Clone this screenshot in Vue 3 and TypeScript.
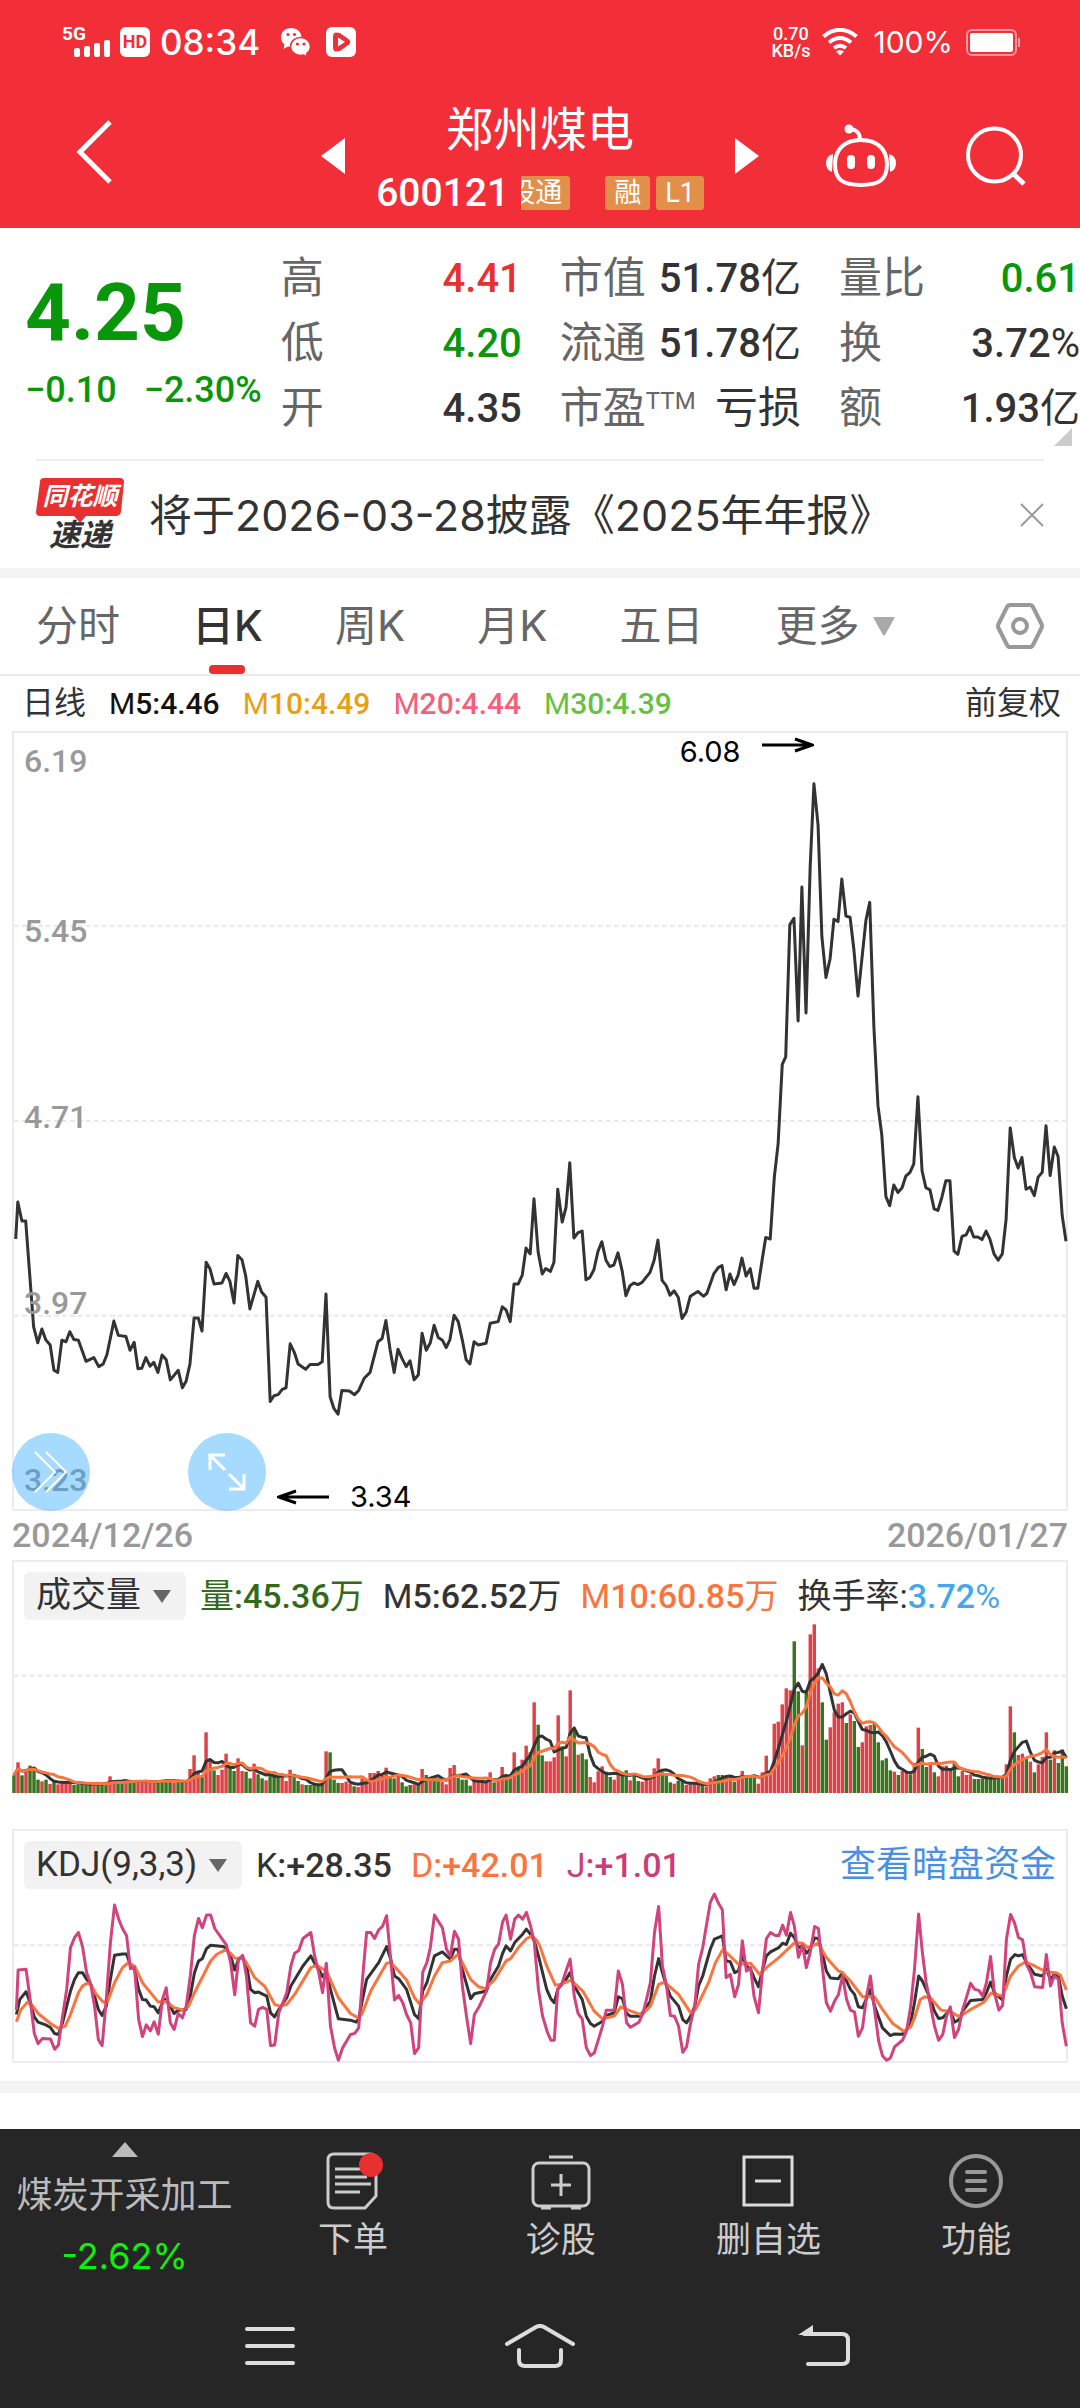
<script setup lang="ts">
import { ref } from 'vue'

interface Quote {
  label: string
  sup?: string
  value: string
  tone?: 'up' | 'down'
  wide?: boolean
}

const quotes: Quote[] = [
  { label: '高', value: '4.41', tone: 'up' },
  { label: '市值', value: '51.78亿' },
  { label: '量比', value: '0.61', tone: 'down' },
  { label: '低', value: '4.20', tone: 'down' },
  { label: '流通', value: '51.78亿' },
  { label: '换', value: '3.72%' },
  { label: '开', value: '4.35' },
  { label: '市盈', sup: 'TTM', value: '亏损', wide: true },
  { label: '额', value: '1.93亿' },
]

const tabs = ['分时', '日K', '周K', '月K', '五日']
const activeTab = ref('日K')
const volumeKind = ref('成交量')
const indicator = ref('KDJ(9,3,3)')

const averages = [
  { text: 'M5:4.46', color: '#111111' },
  { text: 'M10:4.49', color: '#e8a012' },
  { text: 'M20:4.44', color: '#f4607a' },
  { text: 'M30:4.39', color: '#66c23e' },
]
const volumeStats = [
  { text: '量:45.36万', tone: 'vol' },
  { text: 'M5:62.52万', tone: '' },
  { text: 'M10:60.85万', tone: 'orange' },
]
const kdjStats = [
  { text: 'K:+28.35', tone: '' },
  { text: 'D:+42.01', tone: 'orange' },
  { text: 'J:+1.01', tone: 'pink' },
]

/* Figures are set in medium weight, letters and units in regular. */
function runs(text: string) {
  return (text.match(/[0-9.:+−]+|[^0-9.:+−]+/g) ?? []).map((t) => ({
    t,
    figure: /[0-9]/.test(t),
  }))
}

const axis = [
  { text: '6.19', top: 10 },
  { text: '5.45', top: 180 },
  { text: '4.71', top: 366 },
  { text: '3.97', top: 552 },
  { text: '3.23', top: 729 },
]

/* The plot space is 3136 units wide; series are stored as two halves. */
const HALF = 1568
function joinHalves(left: string, right: string): string {
  const moved = right.split(' ').map((p) => {
    const [x, y] = p.split(',').map(Number)
    return `${x + HALF},${y}`
  })
  return `${left} ${moved.join(' ')}`
}

const price = joinHalves(
  '46,962 52,892 64,928 75,928 98,1128 110,1158 122,1132 133,1152 146,1162 157,1210 168,1214 180,1153 192,1156 203,1137 215,1152 228,1153 250,1193 273,1186 287,1203 300,1198 311,1180 331,1117 344,1144 366,1146 378,1172 390,1157 401,1207 412,1206 424,1186 436,1202 447,1195 459,1214 471,1181 483,1190 495,1228 518,1210 530,1243 541,1230 552,1198 564,1111 576,1111 587,1136 599,1006 610,1018 622,1047 645,1045 657,1027 668,1042 680,1083 691,993 703,1001 714,1032 726,1094 749,1042 760,1062 773,1072 785,1269 796,1258 808,1256 820,1246 831,1243 843,1160 855,1176 866,1198 888,1208 901,1199 924,1199 936,1194 947,1066 959,1260 970,1282 982,1293 993,1248 1015,1249 1030,1256 1042,1248 1058,1225 1075,1214 1098,1156 1110,1150 1121,1116 1133,1170 1145,1214 1156,1170 1168,1188 1180,1203 1191,1192 1203,1228 1215,1219 1226,1140 1238,1172 1250,1158 1261,1125 1273,1148 1285,1153 1296,1167 1307,1152 1319,1106 1331,1118 1342,1150 1354,1190 1365,1198 1377,1156 1389,1162 1412,1159 1424,1121 1447,1118 1459,1090 1470,1096 1482,1118 1493,1047 1505,1047 1517,1030 1528,979 1540,990 1551,886 1563,986',
  '7,1028 17,1018 31,1023 41,1006 52,868 65,930 76,902 87,818 99,960 111,950 123,947 134,1039 145,1035 157,1020 169,985 180,967 192,1002 203,1014 215,1011 227,988 239,1022 250,1069 262,1050 273,1045 285,1048 297,1044 320,1025 332,1002 343,964 355,1040 367,1050 378,1068 390,1060 402,1072 413,1112 425,1100 437,1070 459,1061 475,1070 485,1065 505,1028 518,1016 529,1012 541,1058 552,1028 564,1048 576,1030 587,998 599,1032 611,1018 622,1055 633,1055 645,1004 656,959 669,962 681,845 692,782 704,632 714,618 726,368 738,356 750,550 761,297 773,535 785,260 796,102 808,180 819,390 831,468 843,432 854,358 866,362 877,282 889,352 901,354 912,415 924,503 947,360 958,326 970,560 982,710 993,765 1005,882 1016,899 1028,860 1040,874 1052,865 1063,843 1075,836 1086,820 1098,693 1110,833 1121,865 1133,869 1145,905 1156,908 1168,882 1179,852 1191,852 1203,985 1214,991 1226,957 1238,954 1249,939 1260,958 1272,958 1284,963 1296,947 1307,962 1319,990 1331,1002 1343,990 1354,925 1366,752 1378,808 1389,828 1400,808 1412,868 1424,864 1436,880 1447,845 1459,836 1470,748 1482,842 1494,788 1505,806 1517,918 1528,966',
)

const kLine = joinHalves(
  '48,615 58,570 76,547 88,580 100,622 111,638 133,646 147,654 159,672 170,675 182,640 205,545 217,510 228,490 240,490 252,510 264,525 275,560 286,600 297,618 309,590 321,510 333,438 356,434 368,434 379,468 391,480 403,540 414,570 425,572 437,590 448,592 460,610 472,580 483,568 506,612 518,602 541,600 553,560 565,490 577,455 588,448 600,418 612,408 648,412 658,418 670,440 682,482 693,450 705,445 716,465 728,540 740,550 751,548 775,560 786,610 798,622 810,600 833,565 845,530 880,470 903,440 914,462 926,480 937,502 948,488 960,540 983,628 1018,632 1035,638 1042,628 1053,570 1065,510 1100,460 1123,412 1135,450 1146,500 1158,508 1181,540 1204,615 1216,628 1228,545 1240,520 1262,440 1285,428 1308,450 1320,420 1330,420 1343,480 1367,568 1378,553 1413,545 1425,510 1448,470 1460,432 1470,410 1483,425 1495,400 1518,375 1529,360 1541,375 1552,395 1564,440',
  '8,490 20,540 32,568 42,580 52,540 76,510 88,490 100,530 123,570 135,620 147,642 158,650 182,635 193,618 216,610 228,562 240,568 252,612 263,620 288,620 300,608 321,575 333,500 345,448 356,490 368,530 379,560 403,590 415,630 426,640 438,620 450,590 461,530 473,500 495,420 507,390 530,380 541,455 553,457 566,490 577,485 588,440 600,470 612,480 622,505 635,532 647,480 658,440 670,428 694,415 705,402 716,406 728,372 739,385 751,415 763,410 774,432 785,420 798,386 809,388 820,430 832,485 844,506 867,508 879,490 902,540 914,555 925,592 937,595 960,540 972,590 995,655 1018,678 1030,673 1053,674 1065,660 1077,640 1088,580 1100,500 1111,515 1135,570 1146,605 1158,627 1170,625 1192,600 1204,638 1216,632 1228,605 1251,573 1286,570 1297,550 1309,518 1320,550 1344,572 1355,500 1367,450 1380,436 1390,440 1402,436 1413,460 1437,495 1460,500 1471,480 1483,510 1494,495 1506,500 1517,560 1529,598',
)

const dLine = joinHalves(
  '48,637 60,602 80,578 92,585 111,612 147,642 170,657 190,650 205,615 228,550 240,530 254,521 264,525 280,555 300,578 312,578 333,520 356,475 373,460 391,470 414,520 460,578 483,576 506,595 535,602 548,590 565,550 612,455 630,435 655,422 670,432 682,446 705,448 716,460 740,505 770,532 798,585 812,590 833,585 856,555 903,475 920,468 948,485 983,565 1018,612 1042,626 1053,610 1077,545 1123,462 1135,460 1158,485 1181,512 1204,565 1219,584 1240,555 1262,500 1285,460 1308,455 1330,435 1343,460 1367,510 1390,532 1410,538 1437,510 1470,455 1483,448 1506,415 1530,388 1545,380 1560,395',
  '0,410 20,470 45,527 62,525 90,512 125,545 158,605 182,628 216,620 235,592 263,604 296,616 321,590 345,525 362,518 403,555 438,610 452,600 490,520 510,460 532,420 577,465 612,462 638,495 658,475 694,445 740,400 763,402 778,415 809,402 832,445 867,485 879,490 902,515 937,562 972,562 995,600 1025,642 1058,666 1077,652 1090,620 1105,570 1118,562 1135,566 1165,602 1192,606 1218,622 1251,600 1290,578 1310,551 1344,560 1367,500 1390,470 1410,458 1437,470 1471,488 1500,490 1512,498 1529,542',
)

const jLine = joinHalves(
  '48,602 53,482 76,480 88,570 100,672 111,702 123,687 147,688 159,719 170,706 182,620 194,540 205,415 217,385 228,370 240,412 252,490 264,525 275,590 286,690 297,708 309,570 321,400 333,288 345,330 356,358 368,380 379,478 391,475 403,630 414,681 425,646 437,664 448,637 460,674 472,570 483,535 495,640 506,660 518,612 530,625 541,590 553,500 565,378 577,328 588,356 600,318 612,318 624,358 658,408 670,460 682,556 693,450 705,438 716,500 728,640 740,650 751,600 763,594 775,600 786,708 798,706 810,610 833,550 845,470 856,432 868,424 880,388 903,370 914,440 926,490 937,550 948,462 960,650 972,715 983,752 995,715 1018,675 1030,672 1042,655 1053,510 1065,370 1077,370 1088,388 1100,362 1111,352 1123,320 1135,450 1146,572 1158,558 1170,580 1181,615 1193,640 1204,732 1216,715 1228,488 1240,460 1250,415 1262,318 1285,356 1297,420 1308,440 1320,366 1332,390 1343,530 1355,620 1367,702 1378,615 1390,595 1413,545 1425,460 1437,420 1448,405 1460,338 1470,318 1483,390 1495,330 1506,318 1518,330 1529,310 1541,350 1552,400 1564,540',
  '8,620 22,668 32,692 42,692 52,540 65,520 76,485 88,450 100,560 111,612 123,628 135,714 147,738 158,730 170,690 182,650 193,602 216,602 228,485 240,525 252,640 263,653 288,638 300,610 312,560 321,520 333,370 345,292 356,470 368,530 379,618 391,620 403,650 415,728 426,712 438,640 450,590 461,465 473,415 495,280 507,255 520,285 530,302 541,505 553,495 566,562 577,525 588,395 600,485 612,475 622,560 635,610 647,480 658,388 670,370 682,378 694,380 705,348 716,378 728,310 739,350 751,444 763,408 774,475 785,430 798,352 809,358 820,470 832,580 844,605 856,575 867,556 879,500 891,570 902,602 914,608 925,680 937,655 949,560 960,500 972,600 984,695 995,738 1007,752 1018,745 1030,712 1053,692 1065,665 1077,590 1088,480 1100,315 1111,430 1122,520 1135,590 1146,650 1158,692 1170,675 1181,620 1192,592 1204,684 1216,660 1228,600 1240,560 1251,522 1263,540 1275,543 1286,560 1297,520 1309,442 1320,550 1333,602 1344,588 1355,390 1367,316 1378,340 1390,385 1402,392 1413,465 1425,490 1437,532 1460,534 1471,436 1483,530 1494,500 1506,510 1517,640 1529,710',
)

/* Daily volume: r = rising day, g = falling day, then the bar height. */
const volumeData =
  'g53 r92 g53 r72 g82 g76 g40 r35 g40 r27 g36 r26 r34 r34 r36 g24 g26 g27 g26 g27 r28 g28 g28 g30 r50 r36 g34 g30 r36 g36 g36 r34 r30 r36 r38 r30 g36 g38 g40 g38 r30 g34 g34 r36 r72 r113 r60 g48 r182 r100 g68 r54 r70 r118 g76 g66 r104 r66 g64 g44 r88 g56 g44 r38 g56 g56 g54 r54 r36 r70 g48 g36 r26 g24 g24 g24 g24 g30 r125 g122 g40 g30 r30 r34 r28 g20 r18 r44 r40 r60 r60 r66 r52 r76 g46 g44 r52 g32 g20 g24 r26 g26 r72 g54 r44 g44 g44 r34 r26 r75 r84 g46 g40 g40 g22 r36 r38 r38 r30 r62 g32 r42 r78 g50 g50 r122 g76 r100 r142 g122 r272 g205 g113 r95 r95 r107 r233 g140 r110 r308 g185 r115 g119 g101 r48 r32 r65 r80 g64 g48 r40 r58 g60 g68 r38 g52 g36 r34 r50 r52 r74 r104 g62 g56 g32 r28 g36 g34 r24 r26 r28 r26 g26 r20 r44 r50 g54 g54 r46 r50 g34 r48 r66 g48 g50 g48 r28 r62 r112 r68 r208 r214 r266 r314 r308 g455 g305 r143 g300 r476 r506 r374 g272 g160 r197 r242 r268 r272 g210 r236 g216 g138 r152 r200 r204 g208 g152 g98 g104 g68 r64 g54 r66 r62 g56 r90 r196 g132 g78 r86 g62 r50 r80 r82 r74 g90 g50 r66 r54 r56 g42 g42 g42 g48 g48 g46 g46 g50 r86 r260 g182 r114 r118 g104 r94 g62 r86 r108 r182 g100 r128 g90 g130 g80'
const VOLUME_BASE = 879
const bars = volumeData.split(' ').map((s, i) => ({
  x: 41 + i * 11.62,
  h: Number(s.slice(1)),
  fill: s[0] === 'r' ? '#de4246' : '#3a741e',
}))

function movingAverage(days: number): string {
  return bars
    .map((bar, i) => {
      const span = bars.slice(Math.max(0, i - days + 1), i + 1)
      const mean = span.reduce((sum, b) => sum + b.h, 0) / span.length
      return `${bar.x.toFixed(1)},${(VOLUME_BASE - mean).toFixed(1)}`
    })
    .join(' ')
}
const volumeMa5 = movingAverage(5)
const volumeMa10 = movingAverage(10)
</script>

<template>
  <div class="page">
    <header class="header">
      <div class="status">
        <div class="status-side">
          <div class="signal">
            <span class="signal-kind">5G</span>
            <svg class="signal-bars" width="36" height="17" viewBox="0 0 36 17" fill="#fff">
              <rect x="0" y="8" width="6" height="9" rx="2" />
              <rect x="10" y="6" width="6" height="11" rx="2" />
              <rect x="20" y="3" width="6" height="14" rx="2" />
              <rect x="30" y="0" width="6" height="17" rx="2" />
            </svg>
          </div>
          <span class="hd">HD</span>
          <span class="clock">08:34</span>
          <svg class="wechat" width="31" height="31" viewBox="0 0 31 31">
            <path d="M11 1C5 1 1 5 1 10.500c0 3 1.500 5.500 3.500 7L3.500 22l4.500-2.500c1 .3 2 .5 3 .5 6 0 10.500-4 10.500-9.500S17 1 11 1z" fill="#fff" />
            <path d="M20.500 10.500c-5.500 0-10 4-10 9s4.500 9 10 9c1 0 2.200-.2 3.200-.5l3.600 2.200-.6-3.600c2.300-1.700 3.800-4.200 3.800-7.100 0-5-4.500-9-10-9z" fill="#fff" stroke="#f22f38" stroke-width="1.500" />
            <g fill="#f22f38"><circle cx="8" cy="7.500" r="1.600" /><circle cx="14.500" cy="7.500" r="1.600" /><circle cx="17.500" cy="17" r="1.600" /><circle cx="24" cy="17" r="1.600" /></g>
          </svg>
          <svg width="30" height="30" viewBox="0 0 30 30">
            <rect width="30" height="30" rx="6" fill="#fff" />
            <path d="M9.500 5.500 14 6l9 6.500q2.500 2.500 0 5L14 24l-4.500.5Q7 24 7 20V10q0-4 2.500-4.500z" fill="#f22f38" />
            <path d="M12 10.500 19 15l-7 4.500z" fill="#fff" />
          </svg>
        </div>
        <div class="status-side">
          <div class="speed"><span>0.70</span><span>KB/s</span></div>
          <svg width="36" height="28" viewBox="0 0 36 28" fill="none" stroke="#fff" stroke-width="4">
            <path d="M1.500 8.500Q18-5 34.500 8.500" /><path d="M7 14.500Q18 5.500 29 14.500" /><path d="M12 20Q18 15.500 24 20" />
            <path d="M14 23.500Q18 21 22 23.500L18 27.500z" fill="#fff" stroke="none" />
          </svg>
          <span class="percent">100%</span>
          <svg width="54" height="27" viewBox="0 0 54 27">
            <rect x="1" y="1" width="49" height="25" rx="5" fill="none" stroke="#fff" stroke-opacity=".5" stroke-width="2" />
            <rect x="4" y="4" width="43" height="19" rx="2" fill="#fff" />
            <rect x="52" y="9" width="2" height="9" fill="#fff" fill-opacity=".5" />
          </svg>
        </div>
      </div>
      <nav class="titlebar">
        <div class="titlebar-left">
          <button class="plain" aria-label="返回">
            <svg width="37" height="64" viewBox="0 0 37 64" fill="none" stroke="#fff" stroke-width="5"><path d="M34 2 4 32l30 30" /></svg>
          </button>
        </div>
        <div class="titlebar-mid">
          <button class="plain" aria-label="上一只">
            <svg width="24" height="36" viewBox="0 0 24 36"><path d="M24 0v36L0 18z" fill="#fff" /></svg>
          </button>
          <div class="stock">
            <h1>郑州煤电</h1>
            <div class="stock-code">
              <span class="code">600121</span>
              <span class="badge badge-cut"><span>股通</span></span>
              <span class="badge">融</span>
              <span class="badge badge-last">L1</span>
            </div>
          </div>
          <button class="plain" aria-label="下一只">
            <svg width="24" height="36" viewBox="0 0 24 36"><path d="M0 0v36l24-18z" fill="#fff" /></svg>
          </button>
        </div>
        <div class="titlebar-right">
          <button class="plain" aria-label="助手">
            <svg width="70" height="64" viewBox="0 0 70 64" fill="none" stroke="#fff" stroke-width="4">
              <path d="M35 16C18 16 9 26 9 40c0 16 8 21 26 21s26-5 26-21c0-14-9-24-26-24z" />
              <path d="M34 16c0-6-2-10-10-11" /><circle cx="23" cy="5" r="4.500" fill="#fff" stroke="none" />
              <rect x="21" y="31" width="8" height="14" rx="4" fill="#fff" stroke="none" />
              <rect x="41" y="31" width="8" height="14" rx="4" fill="#fff" stroke="none" />
              <path d="M7 30q-7 2-7 9t6 9zM63 30q7 2 7 9t-6 9z" fill="#fff" stroke="none" />
            </svg>
          </button>
          <button class="plain" aria-label="搜索">
            <svg width="60" height="60" viewBox="0 0 60 60" fill="none" stroke="#fff" stroke-width="4"><circle cx="28.500" cy="29" r="26.500" /><path d="M47 47.500 58 58" stroke-width="5" /></svg>
          </button>
        </div>
      </nav>
    </header>

    <section class="quote">
      <div class="quote-main">
        <div class="last">4.25</div>
        <div class="change"><span>−0.10</span><span>−2.30%</span></div>
      </div>
      <dl class="quote-grid">
        <div v-for="q in quotes" :key="q.label" class="quote-cell">
          <dt>{{ q.label }}<sup v-if="q.sup">{{ q.sup }}</sup></dt>
          <dd :class="[q.tone, { wide: q.wide }]"><span v-for="(r, i) in runs(q.value)" :key="i" :class="{ figure: r.figure }">{{ r.t }}</span></dd>
        </div>
      </dl>
      <svg class="corner" width="18" height="18" viewBox="0 0 18 18"><path d="M18 0v18H0z" fill="#ccc" /></svg>
    </section>

    <section class="news">
      <div class="news-logo">
        <svg class="news-flag" width="88" height="45" viewBox="0 0 88 45"><path d="M8 0h76q4 0 4 4l-3 30q-1 4-5 4H50l-6 7-6-7H4q-4 0-4-4L4 4q0-4 4-4z" fill="#e93030" /></svg>
        <span class="news-brand">同花顺</span>
        <span class="news-sub">速递</span>
      </div>
      <a class="news-text" href="#">将于2026-03-28披露《2025年年报》</a>
      <button class="plain" aria-label="关闭">
        <svg width="24" height="24" viewBox="0 0 24 24" stroke="#999" stroke-width="2"><path d="M1 1l22 22M23 1 1 23" /></svg>
      </button>
    </section>

    <nav class="tabs">
      <button
        v-for="t in tabs"
        :key="t"
        class="plain tab"
        :class="{ active: t === activeTab }"
        @click="activeTab = t"
      >{{ t }}</button>
      <button class="plain tab more">更多
        <svg width="22" height="19" viewBox="0 0 22 19"><path d="M1 0h20q1 1 0 2L12 18q-1 1-2 0L1 2Q0 1 1 0z" fill="#aaa" /></svg>
      </button>
      <button class="plain settings" aria-label="设置">
        <svg width="48" height="46" viewBox="0 0 48 46" fill="none" stroke="#999" stroke-width="4"><path d="M14 2h20q2 0 3 2l8.500 17q1 2 0 4L37 42q-1 2-3 2H14q-2 0-3-2L2.500 25q-1-2 0-4L11 4q1-2 3-2z" /><circle cx="24" cy="23" r="7" /></svg>
      </button>
    </nav>

    <div class="legend">
      <span class="legend-name">日线</span>
      <span v-for="a in averages" :key="a.text" :style="{ color: a.color }"><span v-for="(r, i) in runs(a.text)" :key="i" :class="{ figure: r.figure }">{{ r.t }}</span></span>
      <button class="plain legend-adjust">前复权</button>
    </div>

    <section class="panel price-panel">
      <svg class="plot" viewBox="41 6 3055 1466" preserveAspectRatio="none">
        <path class="dash" d="M41 370H3096M41 739H3096M41 1107H3096" />
        <polyline class="line" :points="price" stroke="#333" />
      </svg>
      <span v-for="a in axis" :key="a.text" class="axis" :style="{ top: a.top + 'px' }">{{ a.text }}</span>
      <div class="mark mark-high">
        <span>6.08</span>
        <svg width="52" height="16" viewBox="0 0 52 16" fill="none" stroke="#000" stroke-width="3"><path d="M0 8h50M33 2l17 6-17 6" /></svg>
      </div>
      <div class="mark mark-low">
        <svg width="52" height="16" viewBox="0 0 52 16" fill="none" stroke="#000" stroke-width="3"><path d="M52 8H2M19 2 2 8l17 6" /></svg>
        <span>3.34</span>
      </div>
      <button class="round round-skip" aria-label="展开">
        <svg width="34" height="42" viewBox="0 0 34 42" fill="none" stroke="#fff" stroke-width="2"><path d="M1 1l20 20L1 41M12 1l20 20-20 20" /></svg>
      </button>
      <button class="round round-full" aria-label="全屏">
        <svg width="38" height="38" viewBox="0 0 38 38" fill="none" stroke="#fff" stroke-width="3"><path d="M2 17V2h15M2 2l15 15M36 21v15H21M36 36 21 21" /></svg>
      </button>
    </section>
    <div class="dates"><span>2024/12/26</span><span>2026/01/27</span></div>

    <section class="panel volume-panel">
      <div class="panel-head">
        <label class="picker">
          <select v-model="volumeKind" aria-label="指标一"><option>成交量</option></select>
          <svg width="18" height="13" viewBox="0 0 18 13"><path d="M0 0h18L9 13z" fill="#666" /></svg>
        </label>
        <div class="stats">
          <span v-for="s in volumeStats" :key="s.text" :class="s.tone"><span v-for="(r, i) in runs(s.text)" :key="i" :class="{ figure: r.figure }">{{ r.t }}</span></span>
          <span>换手率:<span class="blue"><span class="figure">3.72</span>%</span></span>
        </div>
      </div>
      <svg class="plot" viewBox="41 360 3055 519" preserveAspectRatio="none">
        <path class="dash" d="M41 527H3096" />
        <rect v-for="(b, i) in bars" :key="i" :x="b.x - 5" :y="VOLUME_BASE - b.h" width="10" :height="b.h" :fill="b.fill" />
        <polyline class="line" :points="volumeMa5" stroke="#333" />
        <polyline class="line" :points="volumeMa10" stroke="#fa743e" />
      </svg>
    </section>

    <section class="panel kdj-panel">
      <div class="panel-head">
        <label class="picker">
          <select v-model="indicator" aria-label="指标二"><option>KDJ(9,3,3)</option></select>
          <svg width="18" height="13" viewBox="0 0 18 13"><path d="M0 0h18L9 13z" fill="#666" /></svg>
        </label>
        <div class="stats">
          <span v-for="s in kdjStats" :key="s.text" :class="s.tone"><span v-for="(r, i) in runs(s.text)" :key="i" :class="{ figure: r.figure }">{{ r.t }}</span></span>
        </div>
        <a class="funds" href="#">查看暗盘资金</a>
      </div>
      <svg class="plot" viewBox="41 240 3055 514" preserveAspectRatio="none">
        <path class="dash" d="M41 408H3096" />
        <polyline class="line" :points="kLine" stroke="#333" />
        <polyline class="line" :points="dLine" stroke="#fa743e" />
        <polyline class="line" :points="jLine" stroke="#d1437c" />
      </svg>
    </section>

    <div class="band"></div>

    <footer class="footer">
      <div class="toolbar">
        <button class="plain sector">
          <svg width="26" height="15" viewBox="0 0 26 15"><path d="M13 0l13 15H0z" fill="#bbb" /></svg>
          <span class="sector-name">煤炭开采加工</span>
          <span class="sector-change">-2.62%</span>
        </button>
        <button class="plain tool">
          <svg width="60" height="60" viewBox="0 0 60 60" fill="none" stroke="#ccc" stroke-width="3">
            <path d="M11 3h36q6 0 6 6v36L42 57H11q-6 0-6-6V9q0-6 6-6z" />
            <path d="M12 18h32M12 26h32M12 33h36M12 41h25" stroke-width="3" /><circle cx="48" cy="14" r="12" fill="#e93030" stroke="none" />
          </svg>
          <span>下单</span>
        </button>
        <button class="plain tool">
          <svg width="60" height="60" viewBox="0 0 60 60" fill="none" stroke="#ccc" stroke-width="3">
            <rect x="2" y="12" width="56" height="43" rx="6" /><path d="M18 6h24" /><path d="M20 34h20M30 23v22M10 57h10M40 57h10" />
          </svg>
          <span>诊股</span>
        </button>
        <button class="plain tool">
          <svg width="60" height="60" viewBox="0 0 60 60" fill="none" stroke="#ddd" stroke-width="3"><rect x="6" y="6" width="48" height="48" /><path d="M17 30h26" /></svg>
          <span>删自选</span>
        </button>
        <button class="plain tool">
          <svg width="60" height="60" viewBox="0 0 60 60" fill="none" stroke="#999" stroke-width="4"><circle cx="30" cy="30" r="25" /><path d="M21 21h18M21 30h18M21 39h18" stroke-linecap="round" /></svg>
          <span>功能</span>
        </button>
      </div>
      <div class="system">
        <button class="plain" aria-label="任务">
          <svg width="50" height="40" viewBox="0 0 50 40" stroke="#ddd" stroke-width="4" stroke-linecap="round"><path d="M2 3h46M2 20h46M2 37h46" /></svg>
        </button>
        <button class="plain" aria-label="主页">
          <svg width="72" height="44" viewBox="0 0 72 44" fill="none" stroke="#ddd" stroke-width="4" stroke-linecap="round"><path d="M3 20 32 3q4-2 8 0l29 17" /><path d="M15 26v10q0 6 6 6h30q6 0 6-6V26" /></svg>
        </button>
        <button class="plain" aria-label="后退">
          <svg width="52" height="42" viewBox="0 0 52 42" fill="none" stroke="#ddd" stroke-width="4"><path d="M6 9h38q6 0 6 6v19q0 5-6 5H10" stroke-linecap="round" /><path d="M15 0v10H0z" fill="#ddd" stroke="none" /></svg>
        </button>
      </div>
    </footer>
  </div>
</template>

<style>
body {
  background: #fff;
}
</style>

<style scoped>
.page {
  background: #fff;
  color: #333;
  font-family: Roboto, "Noto Sans CJK SC", sans-serif;
  font-size: 34px;
  overflow: hidden;
}
svg {
  display: block;
  flex: none;
}
.plain {
  background: none;
  border: 0;
  padding: 0;
  margin: 0;
  font: inherit;
  color: inherit;
}
a {
  text-decoration: none;
}
.figure {
  font-weight: 500;
}

.header {
  background: #f22f38;
  color: #fff;
}
.status {
  height: 84px;
  padding: 0 60px 0 62px;
  display: flex;
  align-items: center;
  justify-content: space-between;
  font-family: Inter, sans-serif;
}
.status-side {
  display: flex;
  align-items: center;
}
.signal {
  width: 48px;
  height: 30px;
  display: flex;
  flex-direction: column;
  align-items: flex-end;
  justify-content: space-between;
}
.signal-kind {
  align-self: flex-start;
  font: 700 19px/13px Roboto, sans-serif;
}
.hd {
  width: 30px;
  height: 30px;
  margin: 0 10px;
  border-radius: 6px;
  background: #fff;
  color: #f22f38;
  font: 700 18px/30px Roboto, sans-serif;
  text-align: center;
}
.clock {
  font-size: 35px;
  font-weight: 500;
}
.wechat {
  margin: 0 15px 0 20px;
}
.speed {
  display: flex;
  flex-direction: column;
  align-items: center;
  margin-right: 12px;
  font: 500 18px/17px Roboto, sans-serif;
}
.percent {
  margin: 0 13px 0 15px;
  font-size: 30px;
}
.titlebar {
  height: 144px;
  display: grid;
  grid-template-columns: 1fr auto 1fr;
  align-items: center;
}
.titlebar-left {
  padding-left: 76px;
}
.titlebar-mid {
  display: flex;
  align-items: center;
  gap: 31px;
}
.titlebar-right {
  display: flex;
  align-items: center;
  justify-content: flex-end;
  gap: 70px;
  padding-right: 54px;
}
.stock h1 {
  margin: 0 0 18px;
  font-size: 47px;
  font-weight: 400;
  line-height: 56px;
  text-align: center;
}
.stock-code {
  display: flex;
  align-items: center;
  height: 34px;
}
.code {
  font-size: 39px;
  font-weight: 500;
  line-height: 34px;
  margin-right: 12px;
}
.badge {
  height: 34px;
  padding: 0 9px;
  border-radius: 3px;
  background: #e28f4a;
  font-size: 27px;
  line-height: 34px;
  white-space: nowrap;
}
.badge-cut {
  width: 41px;
  padding: 0 8px 0 0;
  margin-right: 35px;
  border-radius: 0 3px 3px 0;
  display: flex;
  justify-content: flex-end;
  overflow: hidden;
}
.badge-last {
  margin-left: 6px;
}

.quote {
  position: relative;
  display: flex;
  padding: 18px 0;
}
.quote-main {
  flex: 0 0 26%;
  padding: 25px 0 0 25px;
  box-sizing: border-box;
  color: #0a960a;
}
.last {
  font-size: 80px;
  font-weight: 700;
  line-height: 84px;
}
.change {
  display: flex;
  gap: 27px;
  margin-top: 15px;
  font-size: 36px;
  font-weight: 500;
  line-height: 40px;
  white-space: nowrap;
}
.quote-grid {
  flex: 1;
  margin: 0;
  display: grid;
  grid-template-columns: repeat(3, minmax(0, 1fr));
  column-gap: 38px;
}
.quote-cell {
  display: flex;
  justify-content: space-between;
  height: 65px;
  line-height: 65px;
  white-space: nowrap;
}
dt {
  font-size: 43px;
  color: #666;
}
dt sup {
  font-size: 24px;
  line-height: 24px;
  vertical-align: 14px;
}
dd {
  margin: 0;
  font-size: 40px;
}
dd.wide {
  font-size: 43px;
}
.up {
  color: #e93030;
}
.down {
  color: #0a960a;
}
.corner {
  position: absolute;
  right: 8px;
  bottom: 13px;
}

.news {
  display: flex;
  align-items: center;
  height: 107px;
  margin: 0 36px;
  border-top: 2px solid #eee;
}
.news-logo {
  position: relative;
  width: 88px;
  height: 73px;
  margin-right: 25px;
  font-weight: 700;
  font-style: italic;
  text-align: center;
}
.news-flag {
  position: absolute;
  inset: 0;
}
.news-brand {
  position: relative;
  display: block;
  color: #fff;
  font-size: 25px;
  line-height: 38px;
}
.news-sub {
  position: relative;
  display: block;
  font-size: 31px;
  line-height: 40px;
}
.news-text {
  flex: 1;
  color: #333;
  font-family: Inter, "Noto Sans CJK SC", sans-serif;
  font-size: 43px;
  line-height: 60px;
  white-space: nowrap;
}

.tabs {
  display: flex;
  align-items: stretch;
  gap: 72px;
  height: 96px;
  padding: 0 36px;
  border-top: 10px solid #f4f4f4;
  border-bottom: 2px solid #eaeaea;
}
.tab {
  position: relative;
  color: #666;
  font-family: Inter, "Noto Sans CJK SC", sans-serif;
  font-size: 42px;
  line-height: 96px;
  white-space: nowrap;
}
.tab.active {
  color: #333;
  font-weight: 500;
}
.tab.active::after {
  content: "";
  position: absolute;
  left: 50%;
  bottom: 0;
  width: 36px;
  height: 9px;
  margin-left: -18px;
  border-radius: 4px;
  background: #e93030;
}
.more {
  display: flex;
  align-items: center;
  gap: 14px;
}
.settings {
  margin-left: auto;
}

.legend {
  display: flex;
  align-items: center;
  gap: 23px;
  height: 55px;
  padding: 0 19px 0 22px;
  font-size: 30px;
}
.legend-name,
.legend-adjust {
  font-size: 32px;
  line-height: 55px;
}
.legend-adjust {
  margin-left: auto;
}

.panel {
  position: relative;
  margin: 0 12px;
  border: 2px solid #ececec;
}
.plot {
  width: 100%;
  overflow: visible;
}
.line {
  fill: none;
  stroke-width: 3px;
  stroke-linejoin: round;
  vector-effect: non-scaling-stroke;
}
.dash {
  fill: none;
  stroke: #e8e8e8;
  stroke-width: 2px;
  stroke-dasharray: 5 3;
  vector-effect: non-scaling-stroke;
}
.price-panel .plot {
  height: 776px;
}
.axis {
  position: absolute;
  left: 10px;
  color: #999;
  font-size: 32px;
  font-weight: 500;
  line-height: 36px;
}
.mark {
  position: absolute;
  display: flex;
  gap: 21px;
  color: #000;
  font-family: Inter, sans-serif;
  font-size: 29px;
  line-height: 30px;
}
.mark-high {
  top: 4px;
  right: 24%;
}
.mark-low {
  bottom: -3px;
  left: 25%;
  align-items: center;
}
.round {
  position: absolute;
  bottom: -2px;
  width: 78px;
  height: 78px;
  padding: 0;
  border: 0;
  border-radius: 50%;
  background: rgba(43, 167, 255, 0.42);
  display: flex;
  align-items: center;
  justify-content: center;
}
.round-skip {
  left: -2px;
}
.round-full {
  left: 174px;
}
.dates {
  display: flex;
  justify-content: space-between;
  margin: 0 12px;
  color: #999;
  font-size: 34px;
  font-weight: 500;
  line-height: 49px;
}

.volume-panel {
  border-bottom: 0;
  margin-bottom: 36px;
}
.volume-panel .plot {
  height: 173px;
}
.kdj-panel .plot {
  height: 172px;
}
.panel-head {
  display: flex;
  align-items: center;
  gap: 14px;
  height: 58px;
  padding: 10px 10px 0;
  box-sizing: border-box;
  line-height: 48px;
  white-space: nowrap;
}
.stats {
  display: flex;
  gap: 19px;
}
.picker {
  position: relative;
  display: flex;
  align-items: center;
}
.picker select {
  appearance: none;
  height: 48px;
  padding: 0 44px 0 12px;
  margin: 0;
  border: 0;
  border-radius: 6px;
  background: #f2f2f2;
  color: #333;
  font-family: inherit;
  font-size: 35px;
  line-height: 48px;
}
.picker svg {
  position: absolute;
  right: 15px;
  pointer-events: none;
}
.blue {
  color: #45a7ea;
}
.vol {
  color: #33691a;
}
.orange {
  color: #fa743e;
}
.pink {
  color: #c93f78;
}
.funds {
  margin-left: auto;
  color: #4a90e2;
  font-size: 36px;
}
.band {
  height: 12px;
  margin: 18px 0 36px;
  background: #f4f4f4;
}

.footer {
  background: #262626;
  color: #ccc;
}
.toolbar {
  display: grid;
  grid-template-columns: 6fr 5fr 5fr 5fr 5fr;
  height: 154px;
}
.sector,
.tool {
  display: flex;
  flex-direction: column;
  align-items: center;
  white-space: nowrap;
}
.sector {
  padding-top: 13px;
}
.sector-name {
  margin-top: 14px;
  color: #bbb;
  font-size: 36px;
  line-height: 50px;
}
.sector-change {
  margin-top: 10px;
  color: #0df20d;
  font-family: Inter, sans-serif;
  font-size: 36px;
  line-height: 50px;
}
.tool {
  padding-top: 22px;
  font-size: 35px;
  line-height: 50px;
}
.tool span {
  margin-top: 5px;
}
.system {
  display: grid;
  grid-template-columns: 270fr 270fr 296fr;
  align-items: center;
  justify-items: center;
  height: 125px;
  padding: 0 10% 0 12.500%;
}
</style>
